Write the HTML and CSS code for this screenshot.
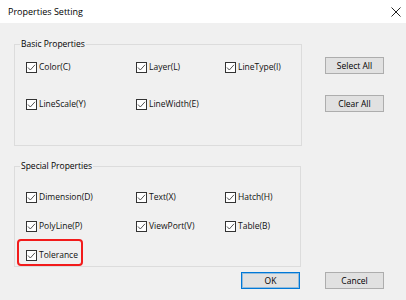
FILE: index.html
```html
<!DOCTYPE html>
<html>
<head>
<meta charset="utf-8">
<link rel="stylesheet" href="styles.css">
</head>
<body>
<div class="window">
  <div class="titlebar">
    <span class="title">Properties Setting</span>
    <span class="close"><svg width="10" height="10" viewBox="0 0 10 10"><path d="M0.5 0.5L9.5 9.5M9.5 0.5L0.5 9.5" stroke="#222" stroke-width="1" fill="none"/></svg></span>
  </div>
  <div class="content">
    <div class="top-row">
      <fieldset class="group group-basic">
        <legend>Basic Properties</legend>
        <div class="grid grid-basic">
          <label class="item"><span class="cb"><svg width="11" height="11" viewBox="0 0 11 11"><rect x="0.5" y="0.5" width="10" height="10" fill="#fff" stroke="#333"/><path d="M2 5.5L4.3 8L9 2.8" stroke="#555" stroke-width="1" fill="none"/></svg></span>Color(C)</label>
          <label class="item"><span class="cb"><svg width="11" height="11" viewBox="0 0 11 11"><rect x="0.5" y="0.5" width="10" height="10" fill="#fff" stroke="#333"/><path d="M2 5.5L4.3 8L9 2.8" stroke="#555" stroke-width="1" fill="none"/></svg></span>Layer(L)</label>
          <label class="item"><span class="cb"><svg width="11" height="11" viewBox="0 0 11 11"><rect x="0.5" y="0.5" width="10" height="10" fill="#fff" stroke="#333"/><path d="M2 5.5L4.3 8L9 2.8" stroke="#555" stroke-width="1" fill="none"/></svg></span>LineType(I)</label>
          <label class="item"><span class="cb"><svg width="11" height="11" viewBox="0 0 11 11"><rect x="0.5" y="0.5" width="10" height="10" fill="#fff" stroke="#333"/><path d="M2 5.5L4.3 8L9 2.8" stroke="#555" stroke-width="1" fill="none"/></svg></span>LineScale(Y)</label>
          <label class="item"><span class="cb"><svg width="11" height="11" viewBox="0 0 11 11"><rect x="0.5" y="0.5" width="10" height="10" fill="#fff" stroke="#333"/><path d="M2 5.5L4.3 8L9 2.8" stroke="#555" stroke-width="1" fill="none"/></svg></span>LineWidth(E)</label>
        </div>
      </fieldset>
      <div class="side-buttons">
        <button class="btn">Select All</button>
        <button class="btn">Clear All</button>
      </div>
    </div>
    <fieldset class="group group-special">
      <legend>Special Properties</legend>
      <div class="grid grid-special">
        <label class="item"><span class="cb"><svg width="11" height="11" viewBox="0 0 11 11"><rect x="0.5" y="0.5" width="10" height="10" fill="#fff" stroke="#333"/><path d="M2 5.5L4.3 8L9 2.8" stroke="#555" stroke-width="1" fill="none"/></svg></span>Dimension(D)</label>
        <label class="item"><span class="cb"><svg width="11" height="11" viewBox="0 0 11 11"><rect x="0.5" y="0.5" width="10" height="10" fill="#fff" stroke="#333"/><path d="M2 5.5L4.3 8L9 2.8" stroke="#555" stroke-width="1" fill="none"/></svg></span>Text(X)</label>
        <label class="item"><span class="cb"><svg width="11" height="11" viewBox="0 0 11 11"><rect x="0.5" y="0.5" width="10" height="10" fill="#fff" stroke="#333"/><path d="M2 5.5L4.3 8L9 2.8" stroke="#555" stroke-width="1" fill="none"/></svg></span>Hatch(H)</label>
        <label class="item"><span class="cb"><svg width="11" height="11" viewBox="0 0 11 11"><rect x="0.5" y="0.5" width="10" height="10" fill="#fff" stroke="#333"/><path d="M2 5.5L4.3 8L9 2.8" stroke="#555" stroke-width="1" fill="none"/></svg></span>PolyLine(P)</label>
        <label class="item"><span class="cb"><svg width="11" height="11" viewBox="0 0 11 11"><rect x="0.5" y="0.5" width="10" height="10" fill="#fff" stroke="#333"/><path d="M2 5.5L4.3 8L9 2.8" stroke="#555" stroke-width="1" fill="none"/></svg></span>ViewPort(V)</label>
        <label class="item"><span class="cb"><svg width="11" height="11" viewBox="0 0 11 11"><rect x="0.5" y="0.5" width="10" height="10" fill="#fff" stroke="#333"/><path d="M2 5.5L4.3 8L9 2.8" stroke="#555" stroke-width="1" fill="none"/></svg></span>Table(B)</label>
        <label class="item item-highlight"><span class="cb"><svg width="11" height="11" viewBox="0 0 11 11"><rect x="0.5" y="0.5" width="10" height="10" fill="#fff" stroke="#333"/><path d="M2 5.5L4.3 8L9 2.8" stroke="#555" stroke-width="1" fill="none"/></svg></span>Tolerance<span class="highlight"></span></label>
      </div>
    </fieldset>
    <div class="bottom-row">
      <button class="btn btn-default">OK</button>
      <button class="btn">Cancel</button>
    </div>
  </div>
</div>
</body>
</html>
```

FILE: styles.css
```css
* { box-sizing: border-box; }
html, body { margin: 0; padding: 0; }
body {
  font-family: "Open Sans", "Noto Sans", sans-serif;
  font-size: 8.5px;
  color: #111;
  background: #f0f0f0;
}
.window {
  width: 406px;
  height: 300px;
  background: #f0f0f0;
  overflow: hidden;
}
.titlebar {
  height: 23px;
  background: #fff;
  display: flex;
  align-items: center;
  justify-content: space-between;
  padding: 0 5px 0 8px;
}
.title {
  font-size: 9px;
  color: #000;
}
.close { display: flex; }
.content {
  padding: 15px 0 0 14px;
}
.top-row {
  display: flex;
}
.group {
  margin: 0;
  border: 1px solid #dcdcdc;
  padding: 0 0 0 5px;
  min-width: 0;
}
.group legend {
  padding: 0 1px;
  line-height: 12px;
  color: #000;
}
.group-basic {
  width: 288px;
  padding-bottom: 34px;
}
.group-special {
  width: 287px;
  margin-top: 14px;
  padding-bottom: 4px;
}
.grid {
  display: grid;
  grid-template-columns: 110px 89px auto;
  grid-auto-rows: 14px;
  margin-left: 6px;
}
.grid-basic {
  margin-top: 10px;
  row-gap: 23px;
}
.grid-special {
  margin-top: 18px;
  row-gap: 15px;
}
.item {
  display: flex;
  align-items: center;
  gap: 2px;
  white-space: nowrap;
  position: relative;
  line-height: 14px;
}
.cb { display: flex; }
.highlight {
  position: absolute;
  left: -9px;
  top: -9px;
  width: 66px;
  height: 27px;
  border: 2.5px solid #f21b1b;
  border-radius: 4px;
}
.side-buttons {
  display: flex;
  flex-direction: column;
  margin-left: 23px;
  margin-top: 19px;
  gap: 21px;
}
.btn {
  width: 59px;
  height: 17px;
  padding: 0;
  font-family: inherit;
  font-size: 8.5px;
  color: #000;
  background: #e1e1e1;
  border: 1px solid #adadad;
}
.btn-default {
  border-color: #0078d7;
  box-shadow: inset 0 0 0 1px rgba(0, 120, 215, 0.35);
}
.bottom-row {
  display: flex;
  justify-content: flex-end;
  gap: 25px;
  padding-right: 22px;
  margin-top: 5px;
}
```
